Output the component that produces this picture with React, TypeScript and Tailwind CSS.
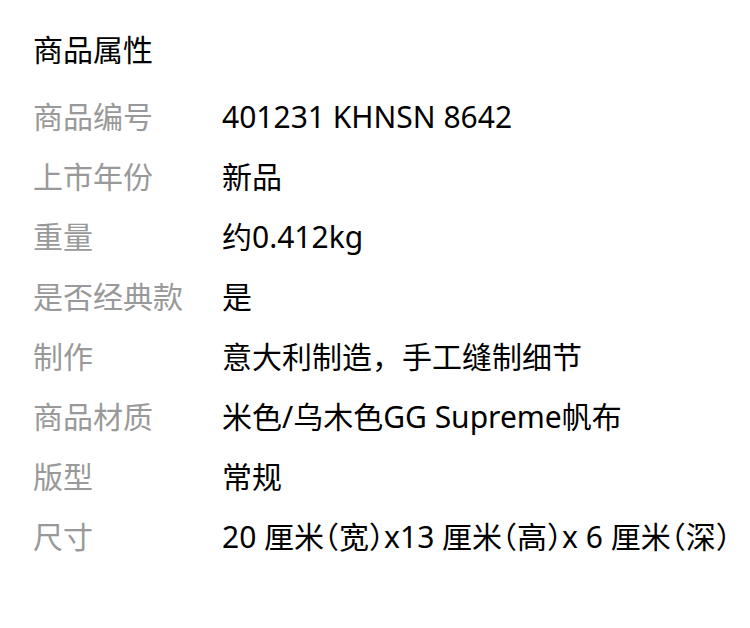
const rows: [string, string][] = [
  ["商品编号", "401231 KHNSN 8642"],
  ["上市年份", "新品"],
  ["重量", "约0.412kg"],
  ["是否经典款", "是"],
  ["制作", "意大利制造，手工缝制细节"],
  ["商品材质", "米色/乌木色GG Supreme帆布"],
  ["版型", "常规"],
];

export default function App() {
  return (
    <div
      className="min-h-[628px] w-[750px] bg-white pl-[33px] pt-[30px]"
      style={{ fontFamily: '"Noto Sans", "Noto Sans CJK SC", sans-serif' }}
    >
      <h2 className="text-[30px] leading-[40px] text-black">商品属性</h2>
      <div className="mt-[16px] flex flex-col">
        {rows.map(([label, value]) => (
          <div key={label} className="flex h-[60px] items-center text-[30px]">
            <span className="w-[189px] shrink-0 text-[#999999]">{label}</span>
            <span className="whitespace-nowrap text-black">{value}</span>
          </div>
        ))}
        <div className="flex h-[60px] items-center text-[30px]">
          <span className="w-[189px] shrink-0 text-[#999999]">尺寸</span>
          <span className="whitespace-nowrap text-black [font-feature-settings:'halt']">
            20 厘米（宽）x13 厘米（高）x 6 厘米（深）
          </span>
        </div>
      </div>
    </div>
  );
}
